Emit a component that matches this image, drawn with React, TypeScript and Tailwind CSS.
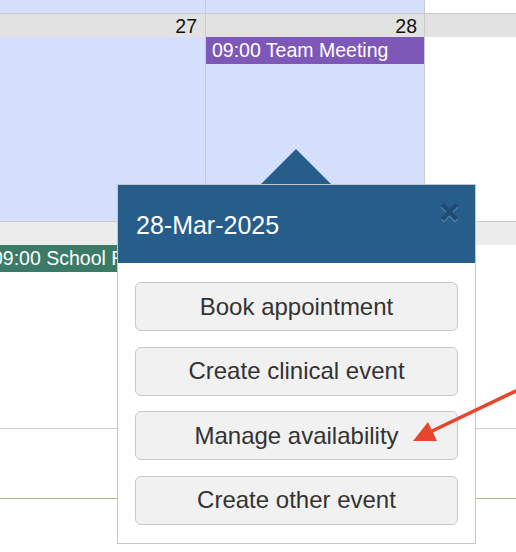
import React from 'react'

const font = { fontFamily: '"Liberation Sans", Arial, sans-serif' }

function PopupActions() {
  const actions = ['Book appointment', 'Create clinical event', 'Manage availability', 'Create other event']
  return (
    <div className="flex flex-col gap-[15.5px] px-[17px] pt-[19px]">
      {actions.map(a => (
        <button
          key={a}
          className="h-[49px] w-full rounded-[6px] border border-[#c8c8c8] bg-[#f1f1f1] text-[24px] text-[#333]"
        >
          {a}
        </button>
      ))}
    </div>
  )
}

export default function App() {
  return (
    <div className="relative h-[552px] w-[516px] overflow-hidden bg-white" style={font}>
      {/* tail of previous week */}
      <div className="flex h-[13px]">
        <div className="w-[206px] border-r border-[#cbcbcb] bg-[#d4dffc]" />
        <div className="w-[219px] border-r border-[#cbcbcb] bg-[#d4dffc]" />
        <div className="flex-1" />
      </div>

      {/* week of 27/28 */}
      <div className="flex h-[209px] border-y border-[#cbcbcb]">
        <div className="flex w-[206px] flex-col border-r border-[#cbcbcb]">
          <div className="h-[23px] bg-[#e2e2e2] pr-[8px] text-right text-[19.5px] leading-[24px] text-[#111]">27</div>
          <div className="flex-1 bg-[#d4dffc]" />
        </div>
        <div className="flex w-[219px] flex-col border-r border-[#cbcbcb]">
          <div className="h-[23px] bg-[#e2e2e2] pr-[7px] text-right text-[19.5px] leading-[24px] text-[#111]">28</div>
          <div className="flex-1 bg-[#d4dffc]">
            <div className="h-[27px] bg-[#7d58b6] pl-[6px] text-[19.5px] leading-[27px] text-white">09:00 Team Meeting</div>
          </div>
        </div>
        <div className="flex flex-1 flex-col">
          <div className="h-[23px] bg-[#e2e2e2]" />
        </div>
      </div>

      {/* next week */}
      <div className="h-[207px] border-b border-[#cbcbcb]">
        <div className="h-[23px] bg-[#ececec]" />
        <div className="ml-[-14px] h-[27px] w-[220px] overflow-hidden whitespace-nowrap bg-[#3c7a68] pl-[6px] text-[19.5px] leading-[27px] text-white">
          09:00 School Run
        </div>
      </div>
      <div className="h-[70px] border-b border-[#a8c084]" />

      {/* popup tail */}
      <svg className="absolute left-[260px] top-[149px]" width="72" height="36" viewBox="0 0 72 36">
        <polygon points="0,36 36,0 72,36" fill="#275d8a" />
      </svg>

      {/* popup */}
      <div className="absolute left-[117px] top-[184px] h-[360px] w-[359px] border border-[#c6c6c6] bg-white">
        <div className="relative flex h-[78px] items-center bg-[#275d8a] pl-[18px] pt-[3px] text-[25px] text-white">
          28-Mar-2025
          <svg className="absolute left-[322px] top-[17px]" width="19" height="22" viewBox="0 0 19 22">
            <g stroke="#5a86ad" strokeWidth="4.2">
              <line x1="2.5" y1="4" x2="16.5" y2="19" />
              <line x1="16.5" y1="4" x2="2.5" y2="19" />
            </g>
            <g stroke="#1e4b74" strokeWidth="4.2">
              <line x1="2.5" y1="2.5" x2="16.5" y2="17.5" />
              <line x1="16.5" y1="2.5" x2="2.5" y2="17.5" />
            </g>
          </svg>
        </div>
        <PopupActions />
      </div>

      {/* red pointer arrow */}
      <svg className="pointer-events-none absolute left-0 top-0" width="516" height="552" viewBox="0 0 516 552">
        <line x1="520" y1="389" x2="430" y2="432" stroke="#e8462c" strokeWidth="3.6" />
        <polygon points="413,441 428,422 437,441" fill="#e8462c" />
      </svg>
    </div>
  )
}
